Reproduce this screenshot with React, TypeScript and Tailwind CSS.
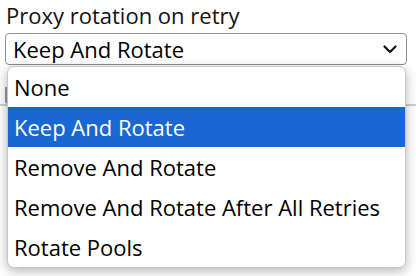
import React, { useState } from 'react';

const options = [
  'None',
  'Keep And Rotate',
  'Remove And Rotate',
  'Remove And Rotate After All Retries',
  'Rotate Pools',
];

const App: React.FC = () => {
  const [selected] = useState('Keep And Rotate');

  return (
    <div className="w-[416px] h-[276px] bg-white overflow-hidden text-black" style={{ fontFamily: '"Open Sans", "Noto Sans", sans-serif' }}>
      <div className="relative pl-[5px] pr-[9px]">
        {/* Label */}
        <div className="text-[22px] leading-[31px] pl-[1px] text-[#111]">Proxy rotation on retry</div>

        {/* Select */}
        <div className="mt-[2px] h-[32px] border border-[#8f8f8f] rounded-[4px] flex items-center justify-between pl-[7px] pr-[9px] bg-white">
          <span className="text-[22px] leading-none">{selected}</span>
          <svg width="14" height="9" viewBox="0 0 14 9" fill="none">
            <path d="M1.5 1.5 L7 7 L12.5 1.5" stroke="#111" strokeWidth="2.2" strokeLinecap="round" strokeLinejoin="round" />
          </svg>
        </div>

        {/* Field behind the popup */}
        <div className="mt-[22px] h-[17px] border-l-2 border-[#9a9a9a] rounded-bl-[3px]" />
        <div className="-ml-[5px] -mr-[9px] h-[2px] bg-[#cfcfcf]" />

        {/* Popup list */}
        <div className="absolute left-[7px] top-[66px] w-[399px] bg-white rounded-[7px] overflow-hidden border border-[#c8c8c8] shadow-[0_3px_12px_rgba(0,0,0,0.3)]">
          {options.map((o) => (
            <div
              key={o}
              className={`h-[40px] flex items-center pl-[6px] text-[22px] ${
                o === selected ? 'bg-[#1967d2] text-white' : 'text-black'
              }`}
            >
              {o}
            </div>
          ))}
        </div>
      </div>
    </div>
  );
};

export default App;
